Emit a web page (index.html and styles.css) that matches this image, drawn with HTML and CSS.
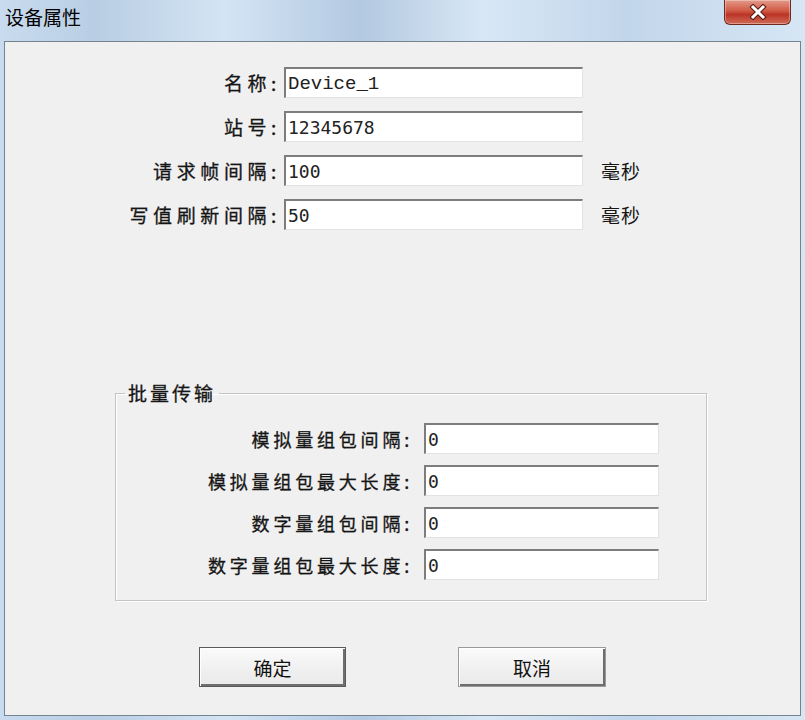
FILE: index.html
```html
<!DOCTYPE html>
<html lang="zh-CN">
<head>
  <meta charset="UTF-8">
  <title>设备属性</title>
  <link rel="stylesheet" href="styles.css">
</head>
<body>
  <div class="window">
    <div class="title-bar">
      <span class="title">设备属性</span>
      <button class="close-btn" aria-label="关闭">
        <svg width="20" height="16" viewBox="0 0 20 16">
          <path d="M5 3 L15 13 M15 3 L5 13" stroke="#5a1a12" stroke-width="5" stroke-linecap="square"/>
          <path d="M5 3 L15 13 M15 3 L5 13" stroke="#ffffff" stroke-width="3" stroke-linecap="square"/>
        </svg>
      </button>
    </div>

    <div class="client">
      <div class="form">
        <div class="row">
          <label class="label">名称:</label>
          <div class="field mono">Device_1</div>
        </div>
        <div class="row">
          <label class="label">站号:</label>
          <div class="field">12345678</div>
        </div>
        <div class="row">
          <label class="label">请求帧间隔:</label>
          <div class="field">100</div>
          <span class="unit">毫秒</span>
        </div>
        <div class="row">
          <label class="label">写值刷新间隔:</label>
          <div class="field">50</div>
          <span class="unit">毫秒</span>
        </div>
      </div>

      <fieldset class="group">
        <legend>批量传输</legend>
        <div class="row">
          <label class="label">模拟量组包间隔:</label>
          <div class="field">0</div>
        </div>
        <div class="row">
          <label class="label">模拟量组包最大长度:</label>
          <div class="field">0</div>
        </div>
        <div class="row">
          <label class="label">数字量组包间隔:</label>
          <div class="field">0</div>
        </div>
        <div class="row">
          <label class="label">数字量组包最大长度:</label>
          <div class="field">0</div>
        </div>
      </fieldset>

      <div class="buttons">
        <button class="btn default">确定</button>
        <button class="btn">取消</button>
      </div>
    </div>
  </div>
</body>
</html>
```

FILE: styles.css
```css
:root {
  --face: #f0f0f0;
  --text: #151515;
  --sunken: #7d7d7d;
  --font-cn: "Noto Sans CJK SC", "Noto Sans", sans-serif;
}

* {
  margin: 0;
  padding: 0;
  box-sizing: border-box;
}

body {
  width: 805px;
  height: 720px;
  overflow: hidden;
  font-family: var(--font-cn);
  color: var(--text);
}

.window {
  width: 805px;
  height: 720px;
  display: flex;
  flex-direction: column;
  background: linear-gradient(90deg, #c8dbef 0%, #b9cee4 12%, #d3e4f4 28%, #b3c9e1 45%, #d8e7f5 60%, #c2d6eb 78%, #d6e6f4 100%);
}

/* Title bar */
.title-bar {
  height: 41px;
  display: flex;
  align-items: flex-start;
}

.title {
  font-size: 19px;
  line-height: 24px;
  margin: 5px 0 0 5px;
  color: #000;
}

.close-btn {
  margin-left: auto;
  margin-right: 14px;
  width: 67px;
  height: 25px;
  border: 1px solid #6e2a20;
  border-top: none;
  border-radius: 0 0 6px 6px;
  background: linear-gradient(180deg, #e39a89 0%, #d05a45 45%, #bb3526 60%, #d06a56 100%);
  box-shadow: inset 0 0 0 1px rgba(255, 255, 255, 0.35);
  display: flex;
  align-items: center;
  justify-content: center;
}

/* Client area */
.client {
  flex: 1;
  margin: 0 4px 4px 4px;
  border: 1px solid #76828e;
  background: var(--face);
  display: flex;
  flex-direction: column;
}

.form {
  display: flex;
  flex-direction: column;
  gap: 13px;
  margin-top: 25px;
}

.row {
  display: flex;
  align-items: center;
}

.label {
  width: 279px;
  padding-right: 3px;
  text-align: right;
  font-size: 19px;
  letter-spacing: 4.6px;
  line-height: 24px;
  -webkit-text-stroke: 0.3px var(--text);
}

.field {
  width: 299px;
  height: 31px;
  background: #fff;
  border-top: 2px solid var(--sunken);
  border-left: 2px solid var(--sunken);
  border-right: 1px solid #e2e2e2;
  border-bottom: 1px solid #e2e2e2;
  padding-left: 2px;
  font-family: "DejaVu Sans Mono", monospace;
  font-size: 18px;
  line-height: 30px;
  color: #222;
}

.field.mono {
  font-family: "Liberation Mono", monospace;
  font-size: 19px;
}

.unit {
  margin-left: 18px;
  font-size: 19px;
  letter-spacing: 1px;
}

/* Group box */
.group {
  margin: 152px 0 0 110px;
  width: 592px;
  border: 1px solid #c4c4c4;
  box-shadow: inset 1px 1px 0 #fff, 1px 1px 0 #fff;
  padding: 0 0 20px 9px;
  display: flex;
  flex-direction: column;
  gap: 11px;
}

.group legend {
  padding: 0 3px;
  font-size: 19px;
  letter-spacing: 3px;
  line-height: 22px;
  margin-bottom: 19px;
  -webkit-text-stroke: 0.3px var(--text);
}

.group .label {
  width: 299px;
  padding-right: 11px;
  font-size: 18px;
  letter-spacing: 3.8px;
}

.group .field {
  width: 235px;
}

/* Buttons */
.buttons {
  display: flex;
  gap: 112px;
  margin: 46px 0 0 194px;
}

.btn {
  width: 147px;
  height: 40px;
  font-family: var(--font-cn);
  font-size: 19px;
  color: #111;
  background: linear-gradient(180deg, #fbfbfb 0%, #f1f1f1 50%, #e9e9e9 100%);
  border: 1px solid #9a9a9a;
  box-shadow: inset 1px 1px 0 #fff, inset -2px -2px 0 #6e6e6e;
}

.btn.default {
  border-color: #5a5a5a;
}

.btn + .btn {
  width: 148px;
}
```
